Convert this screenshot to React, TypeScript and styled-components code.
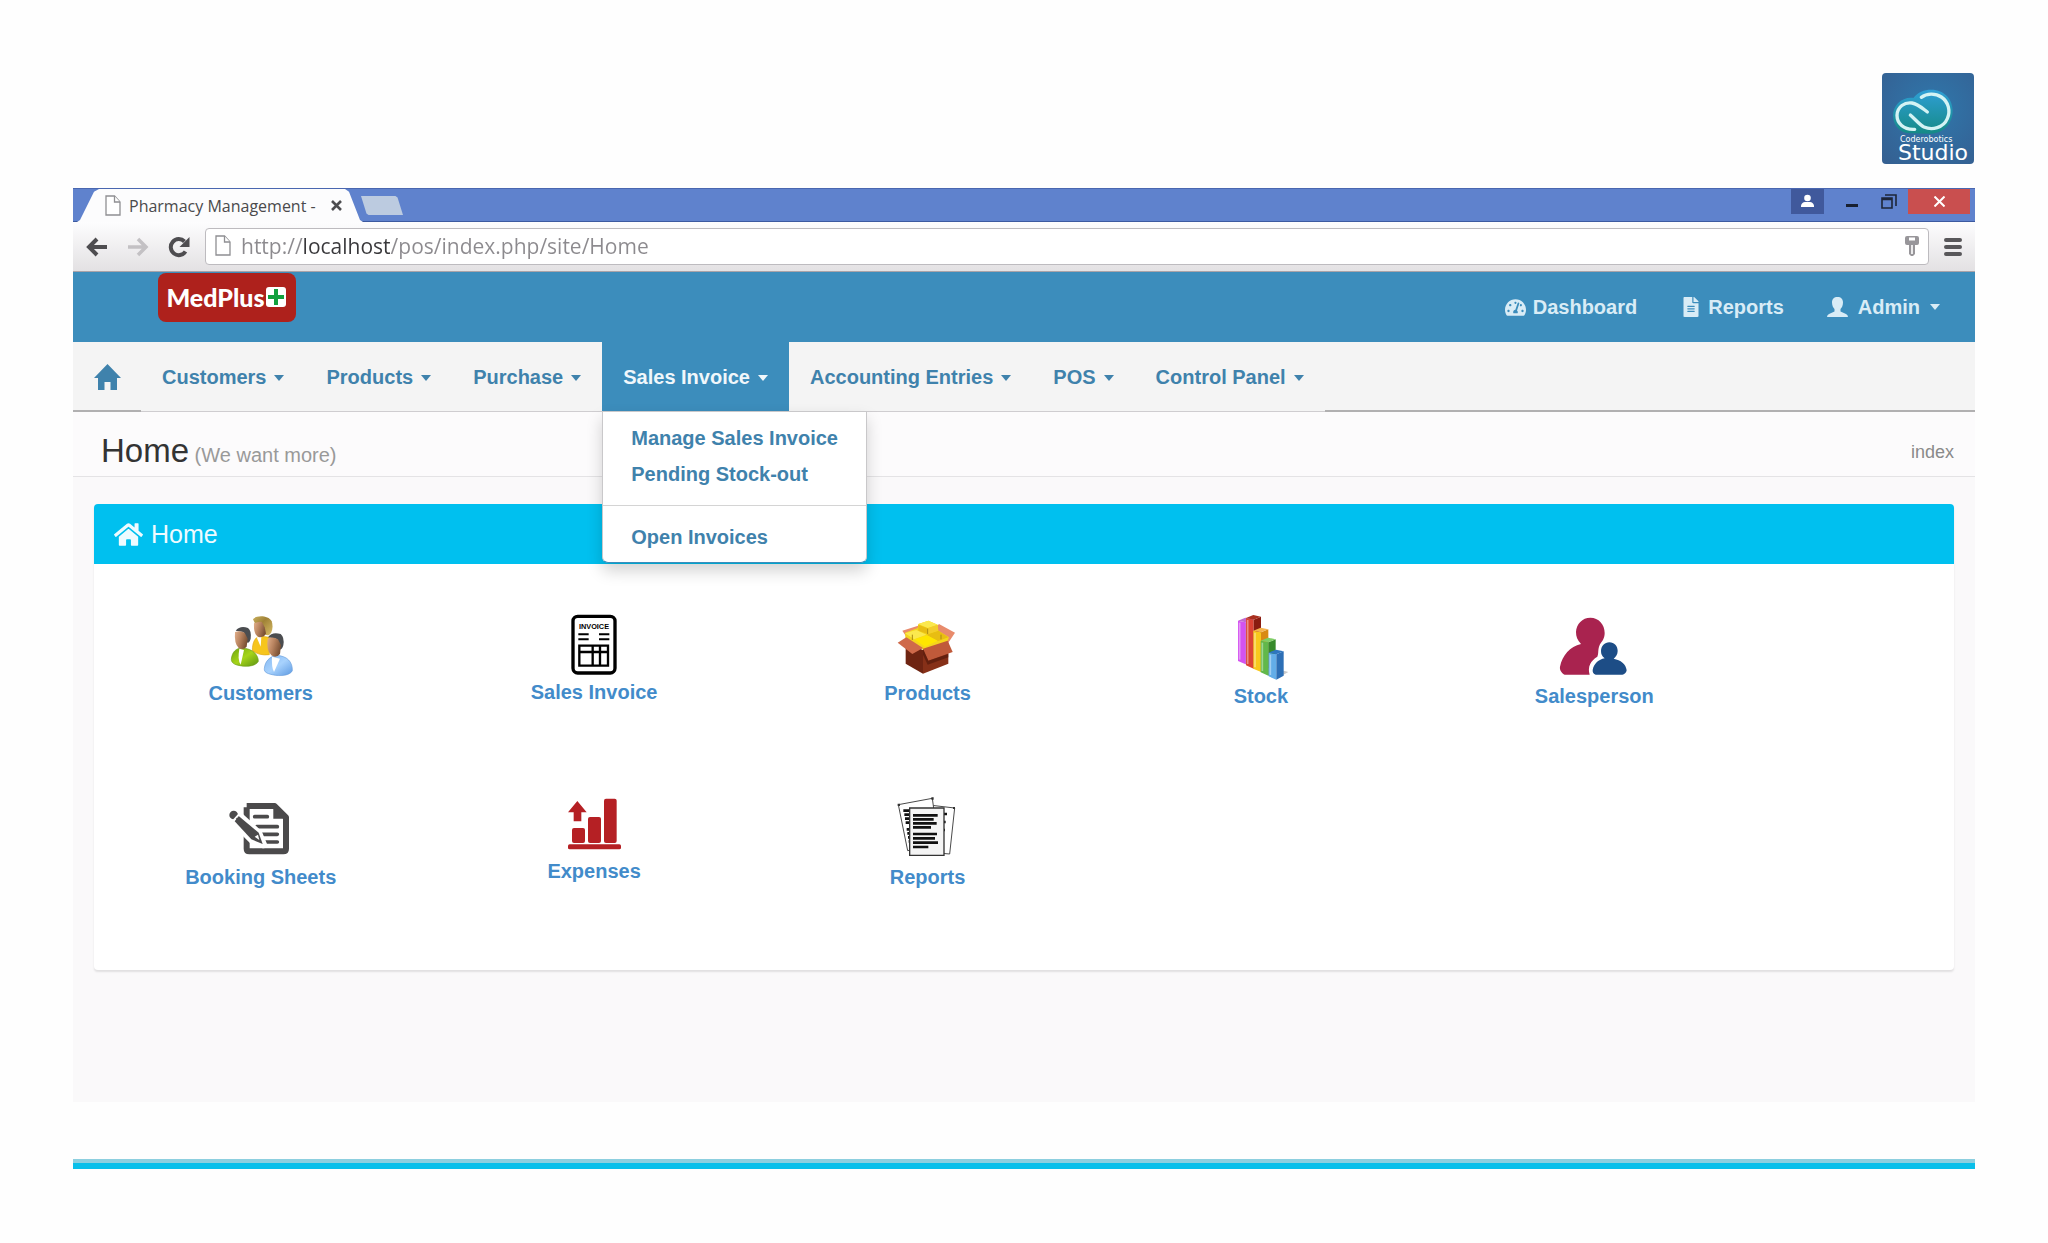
import React from "react";
import styled, { createGlobalStyle, css } from "styled-components";
import { FaHome, FaTachometerAlt, FaFileAlt } from "react-icons/fa";

const sans = `"Liberation Sans", Arial, sans-serif`;
const chromeFont = `"Open Sans", "Noto Sans", sans-serif`;

const GlobalStyle = createGlobalStyle`
  *, *::before, *::after { box-sizing: border-box; }
  body { margin: 0; background: #fefefe; font-family: ${sans}; font-size: 20px; }
  button { font: inherit; border: 0; background: none; padding: 0; color: inherit; cursor: pointer; }
  a { color: inherit; text-decoration: none; }
  ul { list-style: none; margin: 0; padding: 0; }
  svg { display: block; flex: none; }
`;

const Slide = styled.div`
  padding: 73px;
  display: flex;
  flex-direction: column;
`;

const StudioLogo = styled.div`
  align-self: flex-end;
  width: 92px;
  height: 91px;
  margin: 0 1px 24px 0;
  border-radius: 4px;
  background: radial-gradient(circle at 55% 40%, #2f78ac 0%, #33679a 65%, #355f90 100%);
  color: #fff;
  font-family: "DejaVu Sans", sans-serif;
`;
const LogoSmall = styled.div`
  padding-left: 18px;
  font-size: 8px;
  line-height: 10px;
`;
const LogoBig = styled.div`
  padding-left: 16px;
  font-size: 22px;
  line-height: 16px;
`;

const BrowserWindow = styled.div`
  display: flex;
  flex-direction: column;
  background: #faf9fa;
`;

const TitleBar = styled.div`
  display: flex;
  height: 34px;
  background: #5f82cd;
  border-top: 1px solid #4a67b0;
  border-bottom: 1px solid #3c5aa0;
`;
const Tab = styled.div`
  display: flex;
  align-items: center;
  gap: 8px;
  width: 286px;
  height: 33px;
  margin-left: 4px;
  padding-left: 28px;
  background: #fcfcfd;
  clip-path: polygon(0 100%, 3px 94%, 17px 8%, 22px 0, 268px 0, 272px 8%, 283px 94%, 100% 100%);
  font-family: ${chromeFont};
  font-size: 16px;
  color: #4a4a4c;
  white-space: nowrap;
`;
const TabTitle = styled.span`
  width: 194px;
`;
const NewTab = styled.button`
  width: 42px;
  height: 19px;
  margin: 7px 0 0 -2px;
  background: #bccbe0;
  clip-path: polygon(0 0, 82% 0, 87% 8%, 100% 100%, 18% 100%, 13% 92%);
`;
const WindowControls = styled.div`
  display: flex;
  margin-left: auto;
  margin-right: 5px;
  height: 25px;
`;
const ControlButton = styled.button<{ $w: number; $bg?: string }>`
  display: flex;
  align-items: center;
  justify-content: center;
  width: ${(p) => p.$w}px;
  background: ${(p) => p.$bg ?? "transparent"};
`;

const CloseButton = styled(ControlButton)`
  margin-left: 10px;
`;

const Toolbar = styled.div`
  display: flex;
  align-items: center;
  height: 50px;
  padding: 0 13px;
  background: linear-gradient(#fdfdfe, #e3e1e3);
  border-bottom: 1px solid #a9a3a8;
`;
const ToolButton = styled.button`
  display: flex;
  width: 22px;
  margin-right: 19px;
`;
const AddressBar = styled.label`
  flex: 1;
  display: flex;
  align-items: center;
  gap: 10px;
  height: 37px;
  margin: 0 15px 0 -4px;
  padding: 0 9px 2px;
  background: #fff;
  border: 1px solid #bdbbbf;
  border-radius: 4px;
`;
const AddressInput = styled.input`
  flex: 1;
  min-width: 0;
  padding: 0;
  border: 0;
  outline: 0;
  font-family: ${chromeFont};
  font-size: 21px;
  line-height: 30px;
  color: transparent;
  background: linear-gradient(90deg, #8c8a8e 62px, #38373a 62px, #38373a 149px, #8c8a8e 149px);
  background-clip: text;
  -webkit-background-clip: text;
`;

const Header = styled.header`
  display: flex;
  align-items: flex-start;
  height: 70px;
  padding: 1px 14px 0 85px;
  background: #3c8dbc;
`;
const Brand = styled.a`
  display: flex;
  align-items: center;
  justify-content: center;
  gap: 1px;
  width: 138px;
  height: 49px;
  padding: 0 2px 2px 0;
  border-radius: 8px;
  background: #ae211c;
  color: #fff;
  font-family: Lato, sans-serif;
  font-weight: 900;
  font-size: 25px;
`;
const UserMenu = styled.nav`
  display: flex;
  margin-left: auto;
  color: #d9ecf6;
`;
const userItem = css`
  display: flex;
  align-items: center;
  height: 68px;
  font-weight: 700;
  line-height: 28px;
`;
const UserLink = styled.a`
  ${userItem}
  gap: 7px;
  padding: 0 22px;
`;
const UserButton = styled.button`
  ${userItem}
  gap: 10px;
  padding: 0 21px;
`;
const Caret = styled.span`
  border: 5px solid transparent;
  border-top: 6px solid currentColor;
  border-bottom: 0;
`;

const MainNav = styled.nav`
  display: flex;
  height: 70px;
  background: #f4f4f4;
  color: #3f82ac;
`;
const underline = css`
  border-bottom: 2px solid #b1b0b1;
`;
const HomeLink = styled.a`
  display: flex;
  align-items: center;
  width: 68px;
  padding: 2px 0 0 21px;
  ${underline}
`;
const NavFill = styled.div`
  flex: 1;
  ${underline}
`;
const NavList = styled.ul`
  display: flex;
  border-bottom: 1px solid #cfcdd0;
`;
const NavItem = styled.li`
  position: relative;
`;
const NavButton = styled.button<{ $active?: boolean }>`
  display: flex;
  align-items: center;
  gap: 8px;
  height: 69px;
  padding: 2px 21px 0;
  font-weight: 700;
  white-space: nowrap;
  ${(p) => p.$active && css`
    background: #3c8dbc;
    color: #f0f7fb;
  `}
`;
const Dropdown = styled.ul`
  position: absolute;
  z-index: 2;
  top: 100%;
  left: 0;
  width: 265px;
  padding: 8px 0 7px;
  background: #fff;
  border: 1px solid #c9c8ca;
  border-bottom-color: #3c8dbc;
  border-radius: 0 0 6px 6px;
  box-shadow: 0 8px 16px rgba(0, 0, 0, 0.175);
  font-weight: 700;
`;
const DropdownLink = styled.a`
  display: block;
  padding: 0 28px;
  line-height: 36px;
  white-space: nowrap;
`;
const Divider = styled.li`
  height: 1px;
  margin: 13px 0;
  background: #d4d4d4;
`;

const ContentHeader = styled.div`
  display: flex;
  align-items: center;
  justify-content: space-between;
  height: 65px;
  padding: 17px 21px 0 28px;
  background: #fcfbfc;
  border-bottom: 1px solid #e4e3e5;
`;
const PageTitle = styled.h1`
  margin: 0;
  font-size: 33px;
  font-weight: 400;
  line-height: 40px;
  color: #333;
`;
const Subtitle = styled.small`
  font-size: 20px;
  color: #999;
`;
const Crumb = styled.span`
  font-size: 18px;
  color: #8a8a8a;
`;

const Content = styled.main`
  padding: 27px 21px 132px;
`;
const Panel = styled.section`
  background: #fff;
  border-radius: 4px;
  overflow: hidden;
  box-shadow: 0 2px 2px rgba(0, 0, 0, 0.1);
`;
const PanelHeader = styled.h2`
  display: flex;
  align-items: center;
  gap: 8px;
  height: 60px;
  margin: 0;
  padding: 0 20px;
  background: #00c0ef;
  color: #eefbff;
  font-size: 25px;
  font-weight: 400;
`;
const TileGrid = styled.ul`
  display: grid;
  grid-template-columns: repeat(5, 1fr);
  grid-auto-rows: 180px;
  padding: 46px 193px 0 0;
`;
const Tile = styled.a`
  display: flex;
  flex-direction: column;
  align-items: center;
  color: #428bca;
  font-weight: 700;
  line-height: 30px;
`;

const FooterBar = styled.div`
  height: 10px;
  margin-top: 57px;
  background: #09bfea;
  border-top: 4px solid #8dcfdf;
`;

const PageIcon = () => (
  <svg width="16" height="21" viewBox="0 0 16 21" fill="#fff" stroke="#8f8f92" strokeWidth="1.3">
    <path d="M1 1h8.5L15 7v13H1z" />
    <path d="M9.5 1v6H15" />
  </svg>
);

const CustomersArt = () => (
  <svg width="70" height="68" viewBox="138 30 210 204">
    <defs>
      <linearGradient id="skin" x1="0" y1="0" x2="1" y2="0.4">
        <stop offset="0" stopColor="#e2b08c" /><stop offset="0.5" stopColor="#b98460" /><stop offset="1" stopColor="#7c5236" />
      </linearGradient>
      <linearGradient id="green" x1="0" y1="0" x2="1" y2="1">
        <stop offset="0" stopColor="#6ea60c" /><stop offset="0.5" stopColor="#a5d419" /><stop offset="1" stopColor="#5c9412" />
      </linearGradient>
      <linearGradient id="sky" x1="0" y1="0" x2="1" y2="1">
        <stop offset="0" stopColor="#84b8f2" /><stop offset="0.5" stopColor="#a8d2fd" /><stop offset="1" stopColor="#5d9ae2" />
      </linearGradient>
      <linearGradient id="blond" x1="0" y1="0" x2="1" y2="1">
        <stop offset="0" stopColor="#c9b15f" /><stop offset="0.4" stopColor="#a08236" /><stop offset="1" stopColor="#d8bd68" />
      </linearGradient>
    </defs>
    <path d="M217 152C217 128 224 112 240 108L268 112V164Q238 168 217 152Z" fill="#f6c51d" stroke="#e0a810" strokeWidth="2" />
    <path d="M230 112L244 110 242 140Z" fill="#fff" />
    <path d="M219 58C226 46 264 44 275 64 281 80 276 104 264 106L240 102Z" fill="url(#blond)" />
    <path d="M222 70Q235 64 246 66L254 82 258 100Q252 114 236 111 220 104 222 70Z" fill="url(#skin)" />
    <path d="M154 178C156 156 168 144 187 144 218 146 235 164 235 184 230 196 205 202 180 197 162 194 154 188 154 178Z" fill="url(#green)" stroke="#6b9d16" strokeWidth="2" />
    <path d="M178 146L192 150 182 194Q172 180 178 146Z" fill="#fff" />
    <path d="M167 92Q180 76 204 84 215 92 212 116 208 130 202 128L190 96Z" fill="#4b4d50" />
    <path d="M165 96Q180 90 194 98L203 116 200 140Q190 152 176 144 162 130 165 96Z" fill="url(#skin)" />
    <path d="M253 206C255 184 268 170 290 166 322 168 338 186 337 212 330 226 304 230 276 224 260 220 252 216 253 206Z" fill="url(#sky)" stroke="#6a9fdc" strokeWidth="2" />
    <path d="M276 170L300 176 282 216Q274 200 276 170Z" fill="#fff" />
    <path d="M264 112Q276 94 302 102 314 112 310 136 306 150 300 148L288 116Z" fill="#4b4d50" />
    <path d="M263 116Q278 108 294 118L303 136 300 162Q288 176 274 166 258 150 263 116Z" fill="url(#skin)" />
  </svg>
);

const InvoiceArt = () => (
  <svg width="70" height="67" viewBox="1140 30 210 201">
    <rect x="1182" y="49" width="126" height="170" rx="14" fill="#fff" stroke="#000" strokeWidth="10" />
    <text x="1245" y="87" textAnchor="middle" fontFamily="Liberation Sans, Arial, sans-serif" fontWeight="700" fontSize="22">INVOICE</text>
    <path d="M1198 103h31M1198 118h31M1260 103h31M1260 118h31" stroke="#000" strokeWidth="6" />
    <path d="M1201 137h86v60h-86zM1201 156h86M1241 137v60M1263 137v60" fill="none" stroke="#000" strokeWidth="7" />
  </svg>
);

const BoxArt = () => (
  <svg width="70" height="68" viewBox="99 30 210 204">
    <path d="M130 92L182 76 200 84 146 116ZM240 72L288 98 268 128 220 92Z" fill="#e88b6c" />
    <path d="M140 130L192 150V221L140 191Z" fill="#6e2412" />
    <path d="M192 150L268 128V191L192 221Z" fill="#863018" />
    <path d="M138 98L176 84 178 72 208 62 236 74 238 92 270 112 262 132 200 152 140 124Z" fill="#f5d51d" />
    <path d="M178 72L208 62 236 74 206 84ZM138 100L172 90 202 104 166 118Z" fill="#fbe84e" />
    <path d="M178 74L206 85V102L178 92ZM202 104L238 92 268 112 236 124Z" fill="#e8bd12" />
    <path d="M206 85L236 75V92L206 102Z" fill="#f3cc2c" />
    <path d="M166 118L204 106 236 122 198 140Z" fill="#ffe600" />
    <path d="M160 104v16M246 104v14M206 86v16" stroke="#a98c12" strokeWidth="3" fill="none" />
    <path d="M116 128L142 112 192 144 160 162Z" fill="#cf6a4b" />
    <path d="M192 146L266 122 281 156 208 182Z" fill="#c05a3a" />
    <path d="M192 146L208 182 268 162V172L206 194 192 164Z" fill="#541a0c" opacity=".7" />
  </svg>
);

const StockArt = () => {
  const bars = [
    { x: 1131, top: 62, bottom: 193, l: "#d452f0", r: "#9a28b8", t: "#c06ad0" },
    { x: 1155, top: 54, bottom: 206, l: "#dc4334", r: "#8a1c10", t: "#a93020" },
    { x: 1177, top: 92, bottom: 216, l: "#f8c81c", r: "#d98a14", t: "#f4b450" },
    { x: 1199, top: 122, bottom: 227, l: "#62b84a", r: "#378a2c", t: "#7fce66" },
    { x: 1223, top: 158, bottom: 239, l: "#62ade8", r: "#2d6fb6", t: "#2e76c0" },
  ];
  return (
    <svg width="70" height="71" viewBox="1095 30 210 213">
      <path d="M1246 236l36-20-14-4z" fill="#c9c9c9" />
      {bars.map((b) => (
        <g key={b.x}>
          <path d={`M${b.x} ${b.top}l23 5V${b.bottom}l-23 -10z`} fill={b.l} />
          <path d={`M${b.x + 23} ${b.top + 5}l22 -9V${b.bottom - 12}l-22 12z`} fill={b.r} />
          <path d={`M${b.x} ${b.top}l22 -9 23 5 -22 9z`} fill={b.t} />
          <path d={`M${b.x + 5} ${b.top + 6}V${b.bottom - 14}`} stroke="#fff" strokeOpacity=".4" strokeWidth="5" />
        </g>
      ))}
    </svg>
  );
};

const SalespersonArt = () => (
  <svg width="70" height="71" viewBox="177 60 210 213">
    <path d="M271 83C296 83 314 103 314 129 314 146 306 154 300 163 292 180 297 190 292 200 272 212 262 230 269 254H194C186 250 178 240 180 230 187 196 210 170 243 162 232 150 228 140 228 126 229 102 247 83 271 83Z" fill="#a9234f" />
    <path d="M328 157C343 157 353 169 353 183 353 194 347 200 341 206 362 210 378 222 380 241 379 248 373 254 367 254H287C281 252 277 247 278 240 282 220 296 209 314 205 306 199 303 192 303 183 303 169 314 157 328 157Z" fill="#1d4d86" />
  </svg>
);

const BookingArt = () => (
  <svg width="70" height="72" viewBox="138 30 210 216">
    <path d="M200 78H284L318 112V206Q318 214 310 214H208Q200 214 200 206V82" fill="#fff" stroke="#4b4a4b" strokeWidth="18" strokeLinejoin="round" />
    <path d="M280 74L324 116H280Z" fill="#4b4a4b" />
    <path d="M224 110h38M230 140h62M240 163h52M256 186h36" stroke="#4b4a4b" strokeWidth="11" strokeLinecap="round" />
    <path d="M146 110L164 94 236 160 250 194 216 180Z" fill="#4b4a4b" stroke="#fff" strokeWidth="22" strokeLinejoin="round" />
    <path d="M176 108L236 158 248 192 214 178 164 124Z" fill="#4b4a4b" />
    <circle cx="161" cy="105" r="13" fill="#4b4a4b" />
    <path d="M176 104L161 120" stroke="#fff" strokeWidth="5" />
    <path d="M224 170l10-6 4 16z" fill="#fff" />
  </svg>
);

const ExpensesArt = () => (
  <svg width="70" height="66" viewBox="1140 30 210 198" fill="#b52024">
    <path d="M1195 63L1223 97H1207V124H1184V97H1167Z" />
    <rect x="1179" y="144" width="39" height="45" rx="6" />
    <rect x="1227" y="111" width="39" height="78" rx="6" />
    <rect x="1275" y="56" width="38" height="133" rx="6" />
    <rect x="1167" y="193" width="159" height="15" rx="5" />
  </svg>
);

const ReportsArt = () => (
  <svg width="70" height="72" viewBox="99 30 210 216">
    <g fill="#fff" stroke="#4a4a4a" strokeWidth="3">
      <path d="M184 72L287 84 272 222 180 214Z" />
      <path d="M118 74L220 55 238 190 146 212Z" />
    </g>
    <path d="M133 92h20M136 104h18M138 116h16M140 128h14M143 148h12M145 160h10M147 172h8M149 184h6M255 102h9M254 126h6M252 150h6" stroke="#111" strokeWidth="8" />
    <path d="M152 84H255V226H152Z" fill="#f4f4f4" stroke="#333" strokeWidth="4" />
    <path d="M162 106h74M162 118h62M162 130h71M162 142h54M162 162h72M162 175h66M162 188h75M162 201h46" stroke="#111" strokeWidth="8" />
    <path d="M116 71h7v7h-7zM217 52h7v7h-7zM282 81h6v6h-6z" fill="#333" />
  </svg>
);

const tiles: { label: string; art: React.ReactNode }[] = [
  { label: "Customers", art: <CustomersArt /> },
  { label: "Sales Invoice", art: <InvoiceArt /> },
  { label: "Products", art: <BoxArt /> },
  { label: "Stock", art: <StockArt /> },
  { label: "Salesperson", art: <SalespersonArt /> },
  { label: "Booking Sheets", art: <BookingArt /> },
  { label: "Expenses", art: <ExpensesArt /> },
  { label: "Reports", art: <ReportsArt /> },
];

const menus = ["Customers", "Products", "Purchase", "Sales Invoice", "Accounting Entries", "POS", "Control Panel"];

const Studio = () => (
  <StudioLogo>
    <svg width="92" height="62" viewBox="66 39 276 186">
      <defs>
        <linearGradient id="cloud" x1="0" y1="0" x2="0" y2="1">
          <stop offset="0" stopColor="#2f9fd6" /><stop offset="1" stopColor="#158a86" />
        </linearGradient>
      </defs>
      <path d="M155 220C122 222 100 198 99 168 99 136 126 110 160 114 174 96 192 89 214 89 252 89 279 118 278 154 277 192 250 220 214 221Z" fill="url(#cloud)" />
      <path d="M164 208C130 210 111 190 111 166 112 140 134 126 156 129 174 132 186 144 202 156M184 112C200 100 226 99 244 111 266 126 272 154 262 176 250 204 216 212 192 201 178 194 166 178 151 165" fill="none" stroke="#d3f3f4" strokeWidth="10" strokeLinecap="round" />
    </svg>
    <LogoSmall>Coderobotics</LogoSmall>
    <LogoBig>Studio</LogoBig>
  </StudioLogo>
);

const BrowserChrome = () => (
  <>
    <TitleBar>
      <Tab>
        <PageIcon />
        <TabTitle>Pharmacy Management -</TabTitle>
        <button aria-label="Close tab">
          <svg width="11" height="11" viewBox="0 0 11 11" stroke="#4d4d50" strokeWidth="2.6"><path d="M1 1l9 9M10 1l-9 9" /></svg>
        </button>
      </Tab>
      <NewTab aria-label="New tab" />
      <WindowControls>
        <ControlButton $w={33} $bg="#40599c" aria-label="Profile">
          <svg width="13" height="16" viewBox="0 0 13 16" fill="#fff"><circle cx="6.500" cy="4" r="3.300" /><path d="M0 13V11.500Q1 8 4 8h5q3 0 4 3.500V13z" /></svg>
        </ControlButton>
        <ControlButton $w={56} aria-label="Minimise">
          <svg width="12" height="12" viewBox="0 0 12 12"><path d="M0 9.500h12" stroke="#182030" strokeWidth="3" /></svg>
        </ControlButton>
        <ControlButton $w={18} aria-label="Restore">
          <svg width="16" height="16" viewBox="0 0 16 16" fill="none" stroke="#1d2638" strokeWidth="1.600"><path d="M1 4h10v10H1zM1 5.500h10M4 1h11v11" /></svg>
        </ControlButton>
        <CloseButton $w={62} $bg="#c94f4f" aria-label="Close">
          <svg width="11" height="11" viewBox="0 0 11 11" stroke="#fff" strokeWidth="2"><path d="M.5.5l10 10M10.500.5l-10 10" /></svg>
        </CloseButton>
      </WindowControls>
    </TitleBar>
    <Toolbar>
      <ToolButton aria-label="Back">
        <svg width="22" height="20" viewBox="0 0 22 20" fill="none" stroke="#4e4d50" strokeWidth="4"><path d="M21 10H4M11 2L3 10l8 8" /></svg>
      </ToolButton>
      <ToolButton aria-label="Forward">
        <svg width="22" height="20" viewBox="0 0 22 20" fill="none" stroke="#c3c1c4" strokeWidth="3.500"><path d="M1 10h17M11 2l8 8-8 8" /></svg>
      </ToolButton>
      <ToolButton aria-label="Reload">
        <svg width="22" height="22" viewBox="0 0 22 22"><path d="M17.500 15.500A8 8 0 1 1 16.500 5.500" fill="none" stroke="#4e4d50" strokeWidth="4" /><path d="M21.500 1v10H11.500z" fill="#4e4d50" /></svg>
      </ToolButton>
      <AddressBar aria-label="Address">
        <PageIcon />
        <AddressInput type="text" aria-label="Address" defaultValue="http://localhost/pos/index.php/site/Home" />
        <svg width="14" height="22" viewBox="0 0 14 22"><path d="M2 1h10q2 0 2 2v5q0 2-2 2h-2v9l-2 2H6l-2-2v-9H2q-2 0-2-2V3q0-2 2-2z" fill="#98969a" /><path d="M4 2.500h6v3H4zM6.200 10h1.600v9H6.200z" fill="#fff" /></svg>
      </AddressBar>
      <button aria-label="Menu">
        <svg width="18" height="18" viewBox="0 0 18 18" stroke="#58575a" strokeWidth="4" strokeLinecap="round"><path d="M2 2h14M2 9h14M2 16h14" /></svg>
      </button>
    </Toolbar>
  </>
);

export default function App() {
  return (
    <>
      <GlobalStyle />
      <Slide>
        <Studio />
        <BrowserWindow>
          <BrowserChrome />
          <Header>
            <Brand href="#">
              MedPlus
              <svg width="20" height="20" viewBox="0 0 20 20"><rect width="20" height="20" rx="3" fill="#fff" /><path d="M8 2h4v6h6v4h-6v6H8v-6H2V8h6z" fill="#12a03e" /></svg>
            </Brand>
            <UserMenu aria-label="Account">
              <UserLink href="#"><FaTachometerAlt size={21} />Dashboard</UserLink>
              <UserLink href="#"><FaFileAlt size={20} />Reports</UserLink>
              <UserButton>
                <svg width="21" height="20" viewBox="0 0 21 20" fill="#d9ecf6"><path d="M10.500 0C14 0 16 2 16 5.500 16 9 14.500 11 13.500 12V14.500L19 17Q21 18 21 20H0Q0 18 2 17L7.500 14.500V12C6.500 11 5 9 5 5.500 5 2 7 0 10.500 0Z" /></svg>
                Admin
                <Caret />
              </UserButton>
            </UserMenu>
          </Header>
          <MainNav aria-label="Main">
            <HomeLink href="#" aria-label="Home">
              <svg width="27" height="26" viewBox="0 0 27 26" fill="#3f82ac"><path d="M13.500 0L27 14H23V26H16.500V18H10.500V26H4V14H0Z" /></svg>
            </HomeLink>
            <NavList>
              {menus.map((m) => {
                const open = m === "Sales Invoice";
                return (
                  <NavItem key={m}>
                    <NavButton $active={open} aria-expanded={open}>{m}<Caret /></NavButton>
                    {open && (
                      <Dropdown>
                        <li><DropdownLink href="#">Manage Sales Invoice</DropdownLink></li>
                        <li><DropdownLink href="#">Pending Stock-out</DropdownLink></li>
                        <Divider />
                        <li><DropdownLink href="#">Open Invoices</DropdownLink></li>
                      </Dropdown>
                    )}
                  </NavItem>
                );
              })}
            </NavList>
            <NavFill />
          </MainNav>
          <ContentHeader>
            <PageTitle>Home<Subtitle> (We want more)</Subtitle></PageTitle>
            <Crumb>index</Crumb>
          </ContentHeader>
          <Content>
            <Panel>
              <PanelHeader><FaHome size={29} />Home</PanelHeader>
              <TileGrid>
                {tiles.map((t) => (
                  <li key={t.label}>
                    <Tile href="#">{t.art}{t.label}</Tile>
                  </li>
                ))}
              </TileGrid>
            </Panel>
          </Content>
        </BrowserWindow>
        <FooterBar />
      </Slide>
    </>
  );
}
